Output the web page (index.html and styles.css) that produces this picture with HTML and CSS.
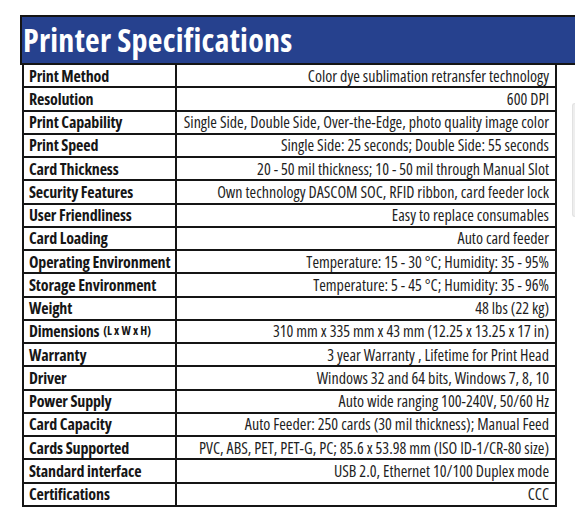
FILE: index.html
```html
<!DOCTYPE html>
<html>
<head>
<meta charset="utf-8">
<link rel="stylesheet" href="styles.css">
</head>
<body>
<div class="page">
  <h1 class="title">Printer Specifications</h1>
  <div class="body-row">
    <div class="specs">
      <div class="label">Print Method</div><div class="value">Color dye sublimation retransfer technology</div>
      <div class="label">Resolution</div><div class="value">600 DPI</div>
      <div class="label">Print Capability</div><div class="value">Single Side, Double Side, Over-the-Edge, photo quality image color</div>
      <div class="label">Print Speed</div><div class="value">Single Side: 25 seconds; Double Side: 55 seconds</div>
      <div class="label">Card Thickness</div><div class="value">20 - 50 mil thickness; 10 - 50 mil through Manual Slot</div>
      <div class="label">Security Features</div><div class="value">Own technology DASCOM SOC, RFID ribbon, card feeder lock</div>
      <div class="label">User Friendliness</div><div class="value">Easy to replace consumables</div>
      <div class="label">Card Loading</div><div class="value">Auto card feeder</div>
      <div class="label">Operating Environment</div><div class="value">Temperature: 15 - 30 °C; Humidity: 35 - 95%</div>
      <div class="label">Storage Environment</div><div class="value">Temperature: 5 - 45 °C; Humidity: 35 - 96%</div>
      <div class="label">Weight</div><div class="value">48 lbs (22 kg)</div>
      <div class="label">Dimensions <small>(L x W x H)</small></div><div class="value">310 mm x 335 mm x 43 mm (12.25 x 13.25 x 17 in)</div>
      <div class="label">Warranty</div><div class="value">3 year Warranty , Lifetime for Print Head</div>
      <div class="label">Driver</div><div class="value">Windows 32 and 64 bits, Windows 7, 8, 10</div>
      <div class="label">Power Supply</div><div class="value">Auto wide ranging 100-240V, 50/60 Hz</div>
      <div class="label">Card Capacity</div><div class="value">Auto Feeder: 250 cards (30 mil thickness); Manual Feed</div>
      <div class="label">Cards Supported</div><div class="value">PVC, ABS, PET, PET-G, PC; 85.6 x 53.98 mm (ISO ID-1/CR-80 size)</div>
      <div class="label">Standard interface</div><div class="value">USB 2.0, Ethernet 10/100 Duplex mode</div>
      <div class="label">Certifications</div><div class="value">CCC</div>
    </div>
    <div class="aside"></div>
  </div>
</div>
</body>
</html>
```

FILE: styles.css
```css
html, body {
  margin: 0;
  padding: 0;
  background: #fff;
  overflow: hidden;
}
.page {
  padding: 15px 0 0 20px;
  font-family: "Open Sans", "Roboto Condensed", sans-serif;
  font-stretch: 75%;
  color: #1e1e1e;
}
.title {
  margin: 0;
  height: 46px;
  background: #26418e;
  border-top: 2px solid #151515;
  border-left: 2px solid #151515;
  border-bottom: 2px solid #151515;
  color: #fff;
  font-size: 32px;
  font-weight: 700;
  line-height: 46px;
  letter-spacing: 0.25px;
  padding-left: 1px;
  white-space: nowrap;
}
.body-row {
  display: flex;
  align-items: flex-start;
  gap: 15px;
  padding-left: 2px;
}
.specs {
  flex: none;
  width: 535px;
  box-sizing: border-box;
  display: grid;
  grid-template-columns: 153px 1fr;
  grid-auto-rows: 23.25px;
  border-left: 2px solid #151515;
  border-right: 2px solid #151515;
}
.label, .value {
  border-bottom: 2px solid #151515;
  font-size: 16px;
  line-height: 1;
  display: flex;
  align-items: center;
  white-space: nowrap;
  overflow: hidden;
}
.label {
  font-weight: 700;
  border-right: 2px solid #151515;
  padding-left: 5px;
  letter-spacing: -0.15px;
  color: #161616;
}
.label small {
  font-size: 12px;
  margin-left: 4px;
  letter-spacing: 0;
}
.value {
  justify-content: flex-end;
  padding-right: 6px;
  font-weight: 400;
}
.aside {
  flex: 1 1 auto;
  min-width: 0;
  margin-top: 38px;
  height: 112px;
  background: #eeeeee;
  border: 1px solid #e2e2e2;
  border-right: none;
  border-radius: 3px 0 0 3px;
}
```
